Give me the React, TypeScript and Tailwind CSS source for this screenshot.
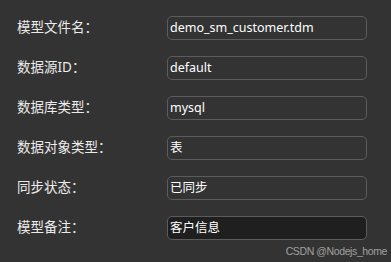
const rows = [
  { label: "模型文件名：", value: "demo_sm_customer.tdm" },
  { label: "数据源ID：", value: "default" },
  { label: "数据库类型：", value: "mysql" },
  { label: "数据对象类型：", value: "表" },
  { label: "同步状态：", value: "已同步" },
  { label: "模型备注：", value: "客户信息", focused: true },
];

export default function App() {
  return (
    <div
      className="relative w-[391px] h-[262px] bg-[#333333] overflow-hidden text-[13px]"
      style={{ fontFamily: '"Noto Sans", "Noto Sans CJK SC", sans-serif' }}
    >
      <div className="flex flex-col gap-[16px] pt-[16px] pl-[17px]">
        {rows.map((row) => (
          <div key={row.label} className="flex items-center h-[24px]">
            <div className="w-[150px] text-[13.5px] text-[#ececec] leading-none">{row.label}</div>
            <div
              className={`w-[200px] h-[24px] rounded-[5px] border border-[#5c5c5c] flex items-center pl-[2px] text-[12.5px] text-white leading-none ${
                row.focused ? "bg-[#1f1f1f]" : "bg-[#333333]"
              }`}
            >
              {row.value}
            </div>
          </div>
        ))}
      </div>
      <div
        className="absolute right-[4px] bottom-[6px] text-[10.5px] tracking-[-0.4px] text-[#a0a0a0] leading-none"
        style={{ fontFamily: '"Liberation Sans", sans-serif' }}
      >
        CSDN @Nodejs_home
      </div>
    </div>
  );
}
